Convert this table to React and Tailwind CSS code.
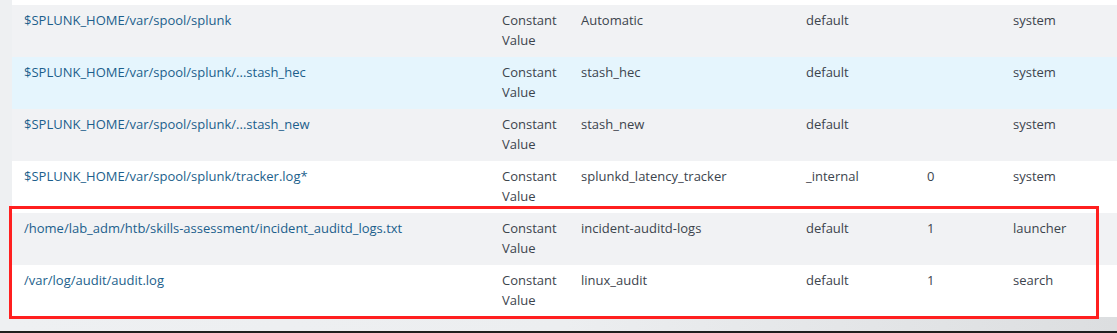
import React from 'react';

const rows = [
  { path: '$SPLUNK_HOME/var/spool/splunk', type: 'Constant Value', source: 'Automatic', index: 'default', count: '', app: 'system', bg: 'bg-[#f1f2f4]' },
  { path: '$SPLUNK_HOME/var/spool/splunk/...stash_hec', type: 'Constant Value', source: 'stash_hec', index: 'default', count: '', app: 'system', bg: 'bg-[#e5f5fd]' },
  { path: '$SPLUNK_HOME/var/spool/splunk/...stash_new', type: 'Constant Value', source: 'stash_new', index: 'default', count: '', app: 'system', bg: 'bg-[#f1f2f4]' },
  { path: '$SPLUNK_HOME/var/spool/splunk/tracker.log*', type: 'Constant Value', source: 'splunkd_latency_tracker', index: '_internal', count: '0', app: 'system', bg: 'bg-white' },
  { path: '/home/lab_adm/htb/skills-assessment/incident_auditd_logs.txt', type: 'Constant Value', source: 'incident-auditd-logs', index: 'default', count: '1', app: 'launcher', bg: 'bg-[#f1f2f4]' },
  { path: '/var/log/audit/audit.log', type: 'Constant Value', source: 'linux_audit', index: 'default', count: '1', app: 'search', bg: 'bg-white' },
];

const Row = ({ row }) => (
  <div className={`grid grid-cols-[478px_79px_225px_121px_86px_1fr] h-[52px] ${row.bg}`}>
    <div className="pl-3 pt-[5px]">
      <a className="text-[#1c5f8c]">{row.path}</a>
    </div>
    <div className="pl-3 pr-1 pt-[5px]">
      Constant<br />Value
    </div>
    <div className="pl-3 pt-[5px]">{row.source}</div>
    <div className="pl-3 pt-[5px]">{row.index}</div>
    <div className="pl-3 pt-[5px]">{row.count}</div>
    <div className="pl-3 pt-[5px]">{row.app}</div>
  </div>
);

export default function App() {
  return (
    <div className="relative w-[1117px] h-[333px] overflow-hidden bg-[#eef0f2] text-[13px] leading-5 text-[#3c444d] font-['Open_Sans',sans-serif]">
      <div className="ml-3">
        <div className="h-[5px] bg-white" />
        {rows.map((row) => (
          <Row key={row.path} row={row} />
        ))}
        <div className="h-[14px] bg-gradient-to-r from-[#eef0f2] via-[#eceef0] to-[#dcdee0]" />
      </div>
      <div className="absolute left-0 right-0 bottom-0 h-[2px] bg-[#1f1f1f]" />
      {/* highlight box */}
      <div className="absolute left-[9px] top-[206px] w-[1090px] h-[113px] border-[3px] border-[#ff1f1f]" />
    </div>
  );
}
